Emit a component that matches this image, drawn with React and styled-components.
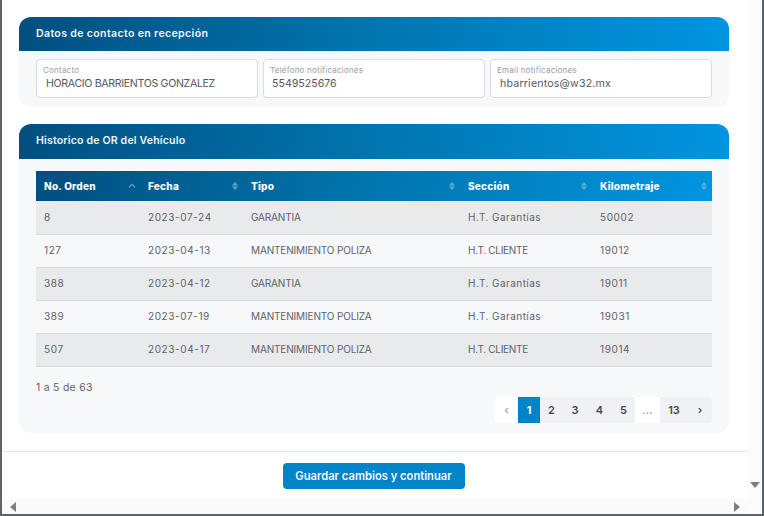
import React from "react";
import styled, { createGlobalStyle, css } from "styled-components";

const Global = createGlobalStyle`
  html, body { margin: 0; padding: 0; background: #fff; overflow: hidden; }
  * { box-sizing: border-box; }
`;
const FONT = `Inter, "Open Sans", "Liberation Sans", sans-serif`;
const GRAD = `linear-gradient(100deg, #014f7f 0%, #0179b4 55%, #0195e0 100%)`;

const Frame = styled.div`
  width: 764px; height: 516px; display: grid;
  grid-template-columns: 1fr 15px; grid-template-rows: 1fr 15px;
  border-left: 2px solid #5f6468; border-right: 2px solid #55656e; border-bottom: 2px solid #5f6468;
  font-family: ${FONT}; background: #fff; overflow: hidden;
`;
const Main = styled.div`
  display: flex; flex-direction: column; min-height: 0; padding-top: 17px;
`;
const Body = styled.div`
  padding: 0 18px 0 17px; display: flex; flex-direction: column; gap: 17px;
`;
const Card = styled.section`
  background: #f7f8fa; border-radius: 12px; overflow: hidden;
`;
const CardHead = styled.header`
  height: ${p => p.$h}px; background: ${GRAD}; color: #eef5fa;
  display: flex; align-items: center; padding: 0 17px ${p => p.$pb}px;
  font-size: 10.6px; font-weight: 600; letter-spacing: ${p => p.$ls}px;
`;
const Fields = styled.div`
  display: grid; grid-template-columns: repeat(3, 222px); gap: 5px;
  padding: 8px 17px 9px;
`;
const Field = styled.div`
  height: 39px; background: #fff; border: 1px solid #d8dbe3; border-radius: 4px;
  padding: 5px 6px 0 6px;
`;
const FieldLabel = styled.div`
  font-size: 8px; line-height: 10px; color: #9a9da3; letter-spacing: 0.22px;
`;
const FieldValue = styled.div`
  font-size: 10.6px; line-height: 14px; color: #55585e; margin-top: 2px; white-space: nowrap;
  padding-left: ${p => p.$pl}px; letter-spacing: ${p => p.$ls}px;
`;
const HistBody = styled.div`
  padding: 12px 17px 10px;
`;
const Table = styled.table`
  width: 676px; border-collapse: collapse; table-layout: fixed; font-size: 10px;
`;
const HeadRow = styled.tr`
  background: ${GRAD}; height: 30px;
`;
const Th = styled.th`
  color: #fff; font-weight: 800; font-size: 10px; text-align: left; padding: 0 0 0 8px; position: relative; letter-spacing: 0.25px;
`;
const SortMark = styled.svg`
  position: absolute; right: 4px; top: 10px; width: 8px; height: 10px;
`;
const Tr = styled.tr`
  height: 33px; background: ${p => (p.$odd ? "#e9eaec" : "#f7f8fa")};
  border-bottom: 1px solid #d9dade;
`;
const Td = styled.td`
  color: #5f6268; padding: 0 0 ${p => (p.$first ? 0 : 2)}px 8px; font-size: 10px; white-space: nowrap;
  letter-spacing: ${p => p.$ls}px;
`;
const Info = styled.div`
  font-size: 10.4px; color: #5f6268; line-height: 14px; margin-top: 14px; letter-spacing: 0.3px;
`;
const PagerRow = styled.div`
  display: flex; justify-content: flex-end; margin-top: 2px;
`;
const Pager = styled.nav`
  display: flex; height: 26px; border-radius: 4px; overflow: hidden;
`;
const Page = styled.span`
  width: ${p => p.$w}px; display: flex; align-items: center; justify-content: center;
  font-size: 11px; font-weight: 600; color: #454952; background: #f0f1f5;
  ${p => p.$active && css`background: #0184c8; color: #fff; font-weight: 700;`}
  ${p => p.$blank && css`background: #fff; color: #a6a9af;`}
`;
const Divider = styled.hr`
  margin: 18px 0 0 0; border: 0; border-top: 1px solid #e6e7eb; height: 0; width: 100%;
`;
const Foot = styled.footer`
  display: flex; justify-content: center; padding: 11px 2px 0 0;
`;
const SaveButton = styled.button`
  width: 182px; height: 26px; border: 0; border-radius: 4px; background: #0184c8; color: #f5fafd;
  font-family: ${FONT}; font-size: 11.2px; font-weight: 600; padding: 0;
`;
const VBar = styled.div`
  background: #fbfbfb; grid-row: 1 / 3; grid-column: 2; display: flex; flex-direction: column; justify-content: flex-end; align-items: center; padding-bottom: 26px;
`;
const HBar = styled.div`
  background: #fafafa; display: flex; justify-content: space-between; align-items: center; padding: 0 7px 0 8px;
`;
const Arrow = styled.svg`
  display: block; fill: #7f7f7f;
`;

const Sort = ({ up }) => (
  <SortMark viewBox="0 0 8 10">
    {up ? (
      <path d="M1 6.2 4 3.4 7 6.2" fill="none" stroke="#6f9cba" strokeWidth="1.2" />
    ) : (
      <g fill="#7fb4d6" opacity="0.8">
        <path d="M4 1 7 4.5H1Z" />
        <path d="M4 9 7 5.5H1Z" />
      </g>
    )}
  </SortMark>
);

const rows = [
  ["8", "2023-07-24", "GARANTIA", "H.T. Garantías", "50002"],
  ["127", "2023-04-13", "MANTENIMIENTO POLIZA", "H.T. CLIENTE", "19012"],
  ["388", "2023-04-12", "GARANTIA", "H.T. Garantías", "19011"],
  ["389", "2023-07-19", "MANTENIMIENTO POLIZA", "H.T. Garantías", "19031"],
  ["507", "2023-04-17", "MANTENIMIENTO POLIZA", "H.T. CLIENTE", "19014"],
];
const cols = [
  ["No. Orden", 104, true],
  ["Fecha", 103],
  ["Tipo", 217],
  ["Sección", 132],
  ["Kilometraje", 120],
];
const cellSpacing = (text) => {
  if (/^[\d-]+$/.test(text)) return 0.6;
  if (/Garant/.test(text)) return 0.45;
  if (/CLIENTE/.test(text)) return -0.3;
  return -0.15;
};
const fields = [
  ["Contacto", "HORACIO BARRIENTOS GONZALEZ", -0.33, 3],
  ["Teléfono notificaciones", "5549525676", 0, 2],
  ["Email notificaciones", "hbarrientos@w32.mx", 0.2, 3],
];
const pages = [
  ["‹", 23, { $blank: true }],
  ["1", 22, { $active: true }],
  ["2", 23],
  ["3", 24],
  ["4", 25],
  ["5", 23],
  ["...", 25, { $blank: true }],
  ["13", 28],
  ["›", 24],
];

export default function App() {
  return (
    <>
      <Global />
      <Frame>
        <Main>
          <Body>
            <Card>
              <CardHead $h={34} $pb={1} $ls={0.33}>Datos de contacto en recepción</CardHead>
              <Fields>
                {fields.map(([l, v, ls, pl]) => (
                  <Field key={l}>
                    <FieldLabel>{l}</FieldLabel>
                    <FieldValue $ls={ls} $pl={pl}>{v}</FieldValue>
                  </Field>
                ))}
              </Fields>
            </Card>
            <Card>
              <CardHead $h={35} $pb={3} $ls={0.15}>Historico de OR del Vehículo</CardHead>
              <HistBody>
                <Table>
                  <colgroup>
                    {cols.map(([n, w]) => <col key={n} style={{ width: w }} />)}
                  </colgroup>
                  <thead>
                    <HeadRow>
                      {cols.map(([n, , up]) => (
                        <Th key={n}>{n}<Sort up={up} /></Th>
                      ))}
                    </HeadRow>
                  </thead>
                  <tbody>
                    {rows.map((r, i) => (
                      <Tr key={r[0]} $odd={i % 2 === 0}>
                        {r.map((c, j) => <Td key={j} $first={i === 0} $ls={cellSpacing(c)}>{c}</Td>)}
                      </Tr>
                    ))}
                  </tbody>
                </Table>
                <Info>1 a 5 de 63</Info>
                <PagerRow>
                  <Pager>
                    {pages.map(([t, w, p]) => <Page key={t} $w={w} {...p}>{t}</Page>)}
                  </Pager>
                </PagerRow>
              </HistBody>
            </Card>
          </Body>
          <Divider />
          <Foot><SaveButton>Guardar cambios y continuar</SaveButton></Foot>
        </Main>
        <VBar>
          <Arrow width="10" height="6" viewBox="0 0 10 6"><path d="M0 0H10L5 6Z" /></Arrow>
        </VBar>
        <HBar>
          <Arrow width="6" height="10" viewBox="0 0 6 10"><path d="M6 0V10L0 5Z" /></Arrow>
          <Arrow width="6" height="10" viewBox="0 0 6 10"><path d="M0 0V10L6 5Z" /></Arrow>
        </HBar>
      </Frame>
    </>
  );
}
